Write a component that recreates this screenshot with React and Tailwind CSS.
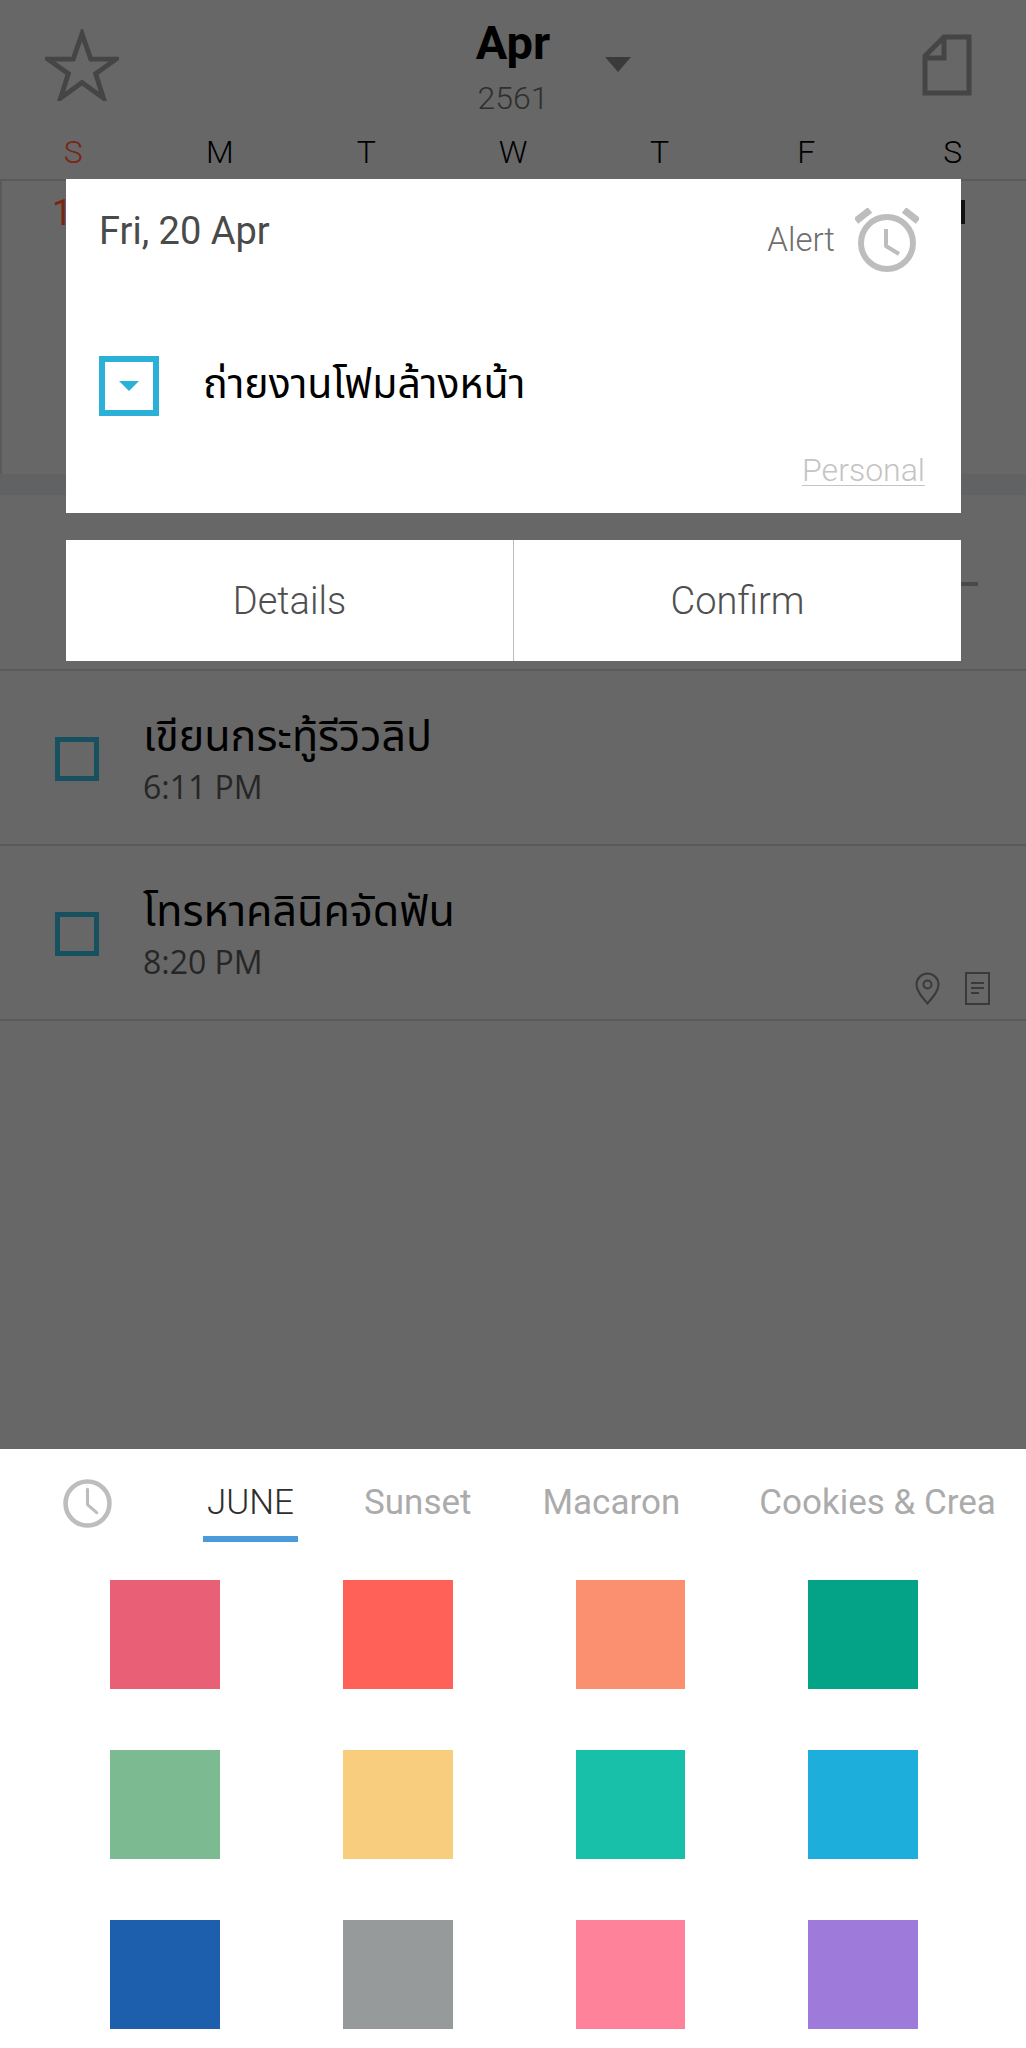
import React from 'react';

const days = ['S', 'M', 'T', 'W', 'T', 'F', 'S'];

const swatches = [
  'bg-[#e95f76]', 'bg-[#ff6058]', 'bg-[#fa9070]', 'bg-[#04a287]',
  'bg-[#7cbb92]', 'bg-[#f8cd7d]', 'bg-[#18c0aa]', 'bg-[#1eaedb]',
  'bg-[#1d5fad]', 'bg-[#979a9b]', 'bg-[#fe8299]', 'bg-[#9e7bdb]',
];

const tasks = [
  { title: 'เขียนกระทู้รีวิวลิป', time: '6:11 PM' },
  { title: 'โทรหาคลินิคจัดฟัน', time: '8:20 PM', icons: true },
];

function ClockIcon({ className }) {
  return (
    <svg className={className} viewBox="0 0 48 48" fill="none" stroke="#bdbdbd" strokeWidth="4.5">
      <circle cx="24" cy="24" r="21.500" />
      <path d="M24 10v15l9 8" strokeLinecap="round" strokeLinejoin="round" strokeWidth="3" />
    </svg>
  );
}

function AlarmIcon() {
  return (
    <svg className="w-[64px] h-[64px]" viewBox="0 0 64 64" fill="none" stroke="#bdbdbd">
      <circle cx="32" cy="35" r="26" strokeWidth="6" />
      <path d="M31 21v17l13 8" strokeWidth="4" strokeLinejoin="round" />
      <path d="M1 13L15 2M63 13L49 2" strokeWidth="7" />
    </svg>
  );
}

function TaskRow({ task }) {
  return (
    <div className="relative h-[175px] border-b-2 border-[#5a5a5a] flex pl-[55px]">
      <div className="w-[44px] h-[44px] mt-[66px] border-[5px] border-[#17505f]" />
      <div className="ml-[44px] mt-[41px]">
        <div className="h-[52px] text-[43px] leading-[52px] text-black font-['Noto_Sans_Thai','Liberation_Sans',sans-serif]">{task.title}</div>
        <div className="mt-[3px] text-[32px] leading-[40px] text-[#262626] font-['Open_Sans',sans-serif]">{task.time}</div>
      </div>
      {task.icons && (
        <div className="absolute right-[36px] bottom-[14px] flex gap-[25px]">
          <svg className="w-[25px] h-[33px]" viewBox="0 0 25 33" fill="none" stroke="#3a3a3a" strokeWidth="2">
            <path d="M12.5 31.5C7 25 1.5 19 1.5 12.5a11 11 0 0 1 22 0C23.500 19 18 25 12.500 31.500z" />
            <circle cx="12.500" cy="12.500" r="4" />
          </svg>
          <svg className="w-[25px] h-[33px]" viewBox="0 0 25 33" fill="none" stroke="#3a3a3a" strokeWidth="2">
            <rect x="1" y="1" width="23" height="31" />
            <path d="M6 11h13M6 16h13M6 21h8" />
          </svg>
        </div>
      )}
    </div>
  );
}

function AlertModal() {
  return (
    <div className="absolute left-[66px] top-[179px] w-[895px] flex flex-col gap-[27px]">
      <div className="relative h-[334px] bg-white">
        <div className="flex items-start justify-between pl-[33px] pr-[42px] pt-[29px]">
          <span className="text-[38px] leading-[46px] text-[#4a4a4a]">Fri, 20 Apr</span>
          <div className="flex items-center gap-[20px]">
            <span className="text-[33px] font-light text-[#6f6f6f]">Alert</span>
            <AlarmIcon />
          </div>
        </div>
        <div className="flex items-center mt-[83px] pl-[33px]">
          <div className="w-[60px] h-[60px] border-[6px] border-[#2bb1d7] flex items-center justify-center">
            <div className="w-0 h-0 border-x-[10px] border-x-transparent border-t-[10px] border-t-[#2bb1d7]" />
          </div>
          <span className="ml-[44px] text-[41px] text-black font-['Noto_Sans_Thai','Liberation_Sans',sans-serif]">ถ่ายงานโฟมล้างหน้า</span>
        </div>
        <span className="absolute right-[36px] bottom-[23px] text-[32px] leading-[40px] font-light text-[#c4c4c4] underline decoration-1 underline-offset-[4px]">Personal</span>
      </div>
      <div className="h-[121px] bg-white flex text-[38px] font-light text-[#4f4f4f] pt-[2px]">
        <div className="flex-1 flex items-center justify-center border-r border-[#bdbdbd] -mt-[2px] pt-[2px]">Details</div>
        <div className="flex-1 flex items-center justify-center">Confirm</div>
      </div>
    </div>
  );
}

export default function App() {
  return (
    <div className="relative w-[1026px] h-[2048px] overflow-hidden flex flex-col bg-[#676767] font-['Roboto','Noto_Sans',sans-serif]">
      {/* Header */}
      <div className="relative h-[130px] flex items-start justify-between pl-[45px] pr-[54px] pt-[29px]">
        <svg className="w-[74px] h-[72px]" viewBox="0 0 76 72" fill="none" stroke="#454545" strokeWidth="5">
          <path d="M38 4l9 26h26L52 45l8 25-22-16-22 16 8-25L3 30h26z" />
        </svg>
        <div className="absolute left-0 right-0 top-[14px] flex flex-col items-center">
          <span className="text-[47px] leading-[58px] font-bold text-black">Apr</span>
          <span className="mt-[6px] text-[32px] leading-[40px] font-light text-[#2f2f2f]">2561</span>
        </div>
        <div className="absolute left-[605px] top-[57px] w-0 h-0 border-x-[13px] border-x-transparent border-t-[15px] border-t-[#3a3a3a]" />
        <svg className="w-[50px] h-[62px] mt-[5px]" viewBox="0 0 50 62" fill="none" stroke="#454545" strokeWidth="5">
          <path d="M47 3v56H3V22L22 3zM3 24h19V3" />
        </svg>
      </div>

      {/* Week days */}
      <div className="h-[49px] grid grid-cols-7 text-[32px] leading-[44px] font-light text-black text-center">
        {days.map((d, i) => (
          <span key={i} className={i === 0 ? 'text-[#7a2415]' : ''}>{d}</span>
        ))}
      </div>

      {/* Calendar grid, mostly behind the modal */}
      <div className="relative h-[295px] border-t-2 border-l-2 border-[#5a5a5a]">
        <span className="absolute left-[50px] top-[10px] text-[36px] leading-[44px] text-[#7a2415]">1</span>
        <div className="absolute left-[959px] top-[19px] w-[4px] h-[24px] bg-[#111111]" />
      </div>
      <div className="h-[21px] bg-[#616264]" />

      {/* Area behind the modal buttons */}
      <div className="relative h-[176px] border-b-2 border-[#5a5a5a]">
        <div className="absolute left-[961px] top-[87px] w-[17px] h-[4px] bg-[#4a4a4a]" />
      </div>

      {tasks.map((task) => (
        <TaskRow key={task.time} task={task} />
      ))}

      <div className="flex-1" />

      {/* Sticker picker */}
      <div className="h-[599px] bg-white">
        <div className="relative h-[131px]">
          <ClockIcon className="absolute left-[63px] top-[30px] w-[49px] h-[49px]" />
          <div className="absolute left-[203px] top-0 right-[31px] h-full overflow-hidden flex text-[35px] leading-[44px]">
            <div className="w-[95px] flex flex-col items-center shrink-0">
              <span className="mt-[32px] text-[#2e2e2e] font-light">JUNE</span>
              <div className="mt-[11px] w-[95px] h-[6px] bg-[#4a9bdc]" />
            </div>
            <span className="ml-[66px] mt-[32px] shrink-0 text-[#ababab]">Sunset</span>
            <span className="ml-[71px] mt-[32px] shrink-0 text-[#ababab]">Macaron</span>
            <span className="ml-[79px] mt-[32px] shrink-0 whitespace-nowrap text-[#ababab]">Cookies &amp; Cream</span>
          </div>
        </div>
        <div className="grid grid-cols-4 gap-x-[123px] gap-y-[61px] pl-[110px] pr-[108px]">
          {swatches.map((c) => (
            <div key={c} className={`h-[109px] ${c}`} />
          ))}
        </div>
      </div>

      <AlertModal />
    </div>
  );
}
